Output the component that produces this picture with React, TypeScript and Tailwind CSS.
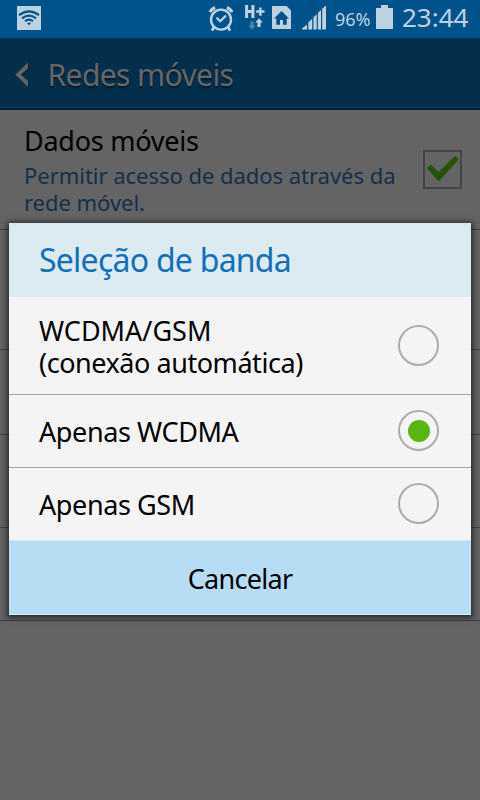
import type { ReactNode } from "react";

function WifiBadge() {
  return (
    <svg className="ml-[17px] block" width="24" height="24" viewBox="0 0 24 24">
      <rect width="24" height="24" fill="#bdd2e0" />
      <g fill="none" stroke="#00538a" strokeWidth="2.1">
        <path d="M2 9.2Q12 1.6 22 9.2" />
        <path d="M5 12.3Q12 6.8 19 12.3" />
        <path d="M8 15.3Q12 12 16 15.3" />
      </g>
      <path d="M10 17.3Q12 15.8 14 17.3L12 19.3Z" fill="#00538a" />
    </svg>
  );
}

function AlarmIcon() {
  return (
    <svg className="block" width="26" height="27" viewBox="0 0 26 27" fill="none" stroke="#bdd2e0">
      <circle cx="13" cy="14.6" r="10" strokeWidth="2.4" />
      <path d="M2 7.2Q3.4 4 7.2 2.8M24 7.2Q22.6 4 18.8 2.8" strokeWidth="3" />
      <path d="M8.6 12.6L12.2 16.2L18 10.6" strokeWidth="2.2" />
      <path d="M6 22L4 25.6M20 22L22 25.6" strokeWidth="2.8" />
    </svg>
  );
}

function HspaIcon() {
  return (
    <svg className="block" width="20" height="26" viewBox="0 0 20 26">
      <path d="M1.6 1V14M7.9 1V14M1.6 7.4H8" fill="none" stroke="#bdd2e0" strokeWidth="3" />
      <path d="M11.2 7.5H19.5M15.4 3.5V11.8" stroke="#bdd2e0" strokeWidth="2.4" />
      <path d="M5.4 17.5H8.8V21.5H10.8L7.1 25.8L3.4 21.5H5.4Z" fill="#4783ad" />
      <path d="M14 14.2L17.8 18.4H15.6V23H12.4V18.4H10.2Z" fill="#bdd2e0" />
    </svg>
  );
}

function SimHomeIcon() {
  return (
    <svg className="block" width="19" height="23" viewBox="0 0 19 23">
      <path d="M0 0H14.5L19 4.5V23H0Z" fill="#bdd2e0" />
      <path d="M9.5 5L17 12.4H14.7V18.7H11V14H8V18.7H4.3V12.4H2Z" fill="#00538a" />
    </svg>
  );
}

function SignalIcon() {
  return (
    <svg className="block" width="24" height="25" viewBox="0 0 24 25" fill="#bdd2e0">
      <path d="M0 24.5V23.5L5 19.5V24.5ZM6.3 24.5V17.2L10.2 13.8V24.5ZM11.5 24.5V12.2L14.7 9.2V24.5ZM15.9 24.5V8L19 5V24.5ZM20.2 24.5V3.8L24 0.5V24.5Z" />
    </svg>
  );
}

function BatteryIcon() {
  return (
    <svg className="block" width="17" height="24" viewBox="0 0 17 24">
      <path d="M5 0H12V3H17V24H0V3H5Z" fill="#bdd2e0" />
    </svg>
  );
}

function StatusBar() {
  return (
    <div className="flex h-[38px] shrink-0 items-start bg-[#00538a] text-[#bdd2e0]">
      <div className="pt-1.5"><WifiBadge /></div>
      <div className="ml-[167px] pt-[5px]"><AlarmIcon /></div>
      <div className="ml-[11px] pt-1"><HspaIcon /></div>
      <div className="ml-[7px] pt-1.5"><SimHomeIcon /></div>
      <div className="ml-[11px] pt-[5px]"><SignalIcon /></div>
      <div className="ml-[9px] w-[41px] pt-[3px] text-[18px] leading-8 whitespace-nowrap">96%</div>
      <div className="pt-[5px]"><BatteryIcon /></div>
      <div className="ml-[9px] text-[26px] leading-[34px] whitespace-nowrap">23:44</div>
    </div>
  );
}

function Radio({ checked }: { checked?: boolean }) {
  return (
    <span className="flex size-[41px] shrink-0 items-center justify-center rounded-full border-2 border-[#a9adb0]">
      {checked && <span className="size-[22px] rounded-full bg-[#58b512]" />}
    </span>
  );
}

function Option({ className, checked, children }: { className: string; checked?: boolean; children: ReactNode }) {
  return (
    <div className={`flex items-start justify-between pr-[32px] pl-[30px] ${className}`}>
      <span className="mt-[6px] text-[27px] leading-8 tracking-[-0.4px] whitespace-nowrap text-black">{children}</span>
      <Radio checked={checked} />
    </div>
  );
}

function BandDialog() {
  return (
    <div className="absolute top-[223px] left-[9px] flex h-[392px] w-[462px] flex-col bg-[#f4f4f4] shadow-[0_1px_6px_2px_rgba(0,0,0,0.6)]">
      <div className="h-[74px] bg-[#dceaf1] pl-[30px] text-[32px] leading-[74px] tracking-[-0.75px] text-[#0f6ebe]">
        <span className="whitespace-nowrap">Seleção de banda</span>
      </div>
      <div className="flex h-[98px] items-center justify-between border-b border-[#a5a7a8] pr-[32px] pl-[30px] text-[27px] leading-8 whitespace-nowrap text-black">
        <div className="pt-0.5">
          <div>WCDMA/GSM</div>
          <div className="tracking-[-0.45px]">(conexão automática)</div>
        </div>
        <Radio />
      </div>
      <Option className="h-[73px] border-b border-[#a5a7a8] pt-[15px]" checked>Apenas WCDMA</Option>
      <Option className="h-[72px] pt-[15px]">Apenas GSM</Option>
      <div className="h-[75px] border-y border-[#d8edf8] bg-[#b7ddf4] text-center text-[27px] leading-[75px] tracking-[-0.7px] text-black">
        Cancelar
      </div>
    </div>
  );
}

export default function App() {
  return (
    <div className="relative flex h-[800px] w-[480px] flex-col overflow-hidden bg-[#646464] font-['Noto_Sans',sans-serif]">
      <StatusBar />
      <div className="flex h-[72px] items-center border-b-2 border-[#021f33] bg-[#032e4c] pt-[3px] shadow-[inset_0_-1px_0_#0d3a5a]">
        <svg className="ml-[15px] block" width="14" height="26" viewBox="0 0 14 26">
          <path d="M13.8 2V8L7 13.8L13.8 20V26L0.8 14Z" fill="#021b2c" />
          <path d="M13 0.5V6.5L6 12.8L13 19V25L0.3 12.8Z" fill="#646464" />
        </svg>
        <span className="ml-[18.5px] text-[30px] leading-10 tracking-[-0.6px] text-[#666] [text-shadow:0_2px_1px_#021b2c]">Redes móveis</span>
      </div>
      <div className="flex h-[120px] items-start border-b border-[#434343] pt-[13px] pl-6">
        <div className="w-[399px]">
          <div className="text-[27px] leading-9 tracking-[-0.25px] text-black">Dados móveis</div>
          <div className="mt-[3px] text-[22px] leading-[27px] tracking-[-0.03px] whitespace-nowrap text-[#132f4b]">
            Permitir acesso de dados através da
            <br />
            rede móvel.
          </div>
        </div>
        <div className="mt-[27px] size-[39px] border-2 border-[#444]">
          <svg className="block" width="35" height="35" viewBox="425 152 35 35">
            <path d="M427 168.2L430.6 164.6L438.6 172L455.2 155.8L458.8 159.6L438.6 181.4Z" fill="#245207" />
          </svg>
        </div>
      </div>
      <div className="h-[120px] border-b border-[#434343]" />
      <div className="h-[85px] border-b border-[#434343]" />
      <div className="h-[93px] border-b border-[#434343]" />
      <div className="h-[93px] border-b border-[#434343]" />
      <BandDialog />
    </div>
  );
}
